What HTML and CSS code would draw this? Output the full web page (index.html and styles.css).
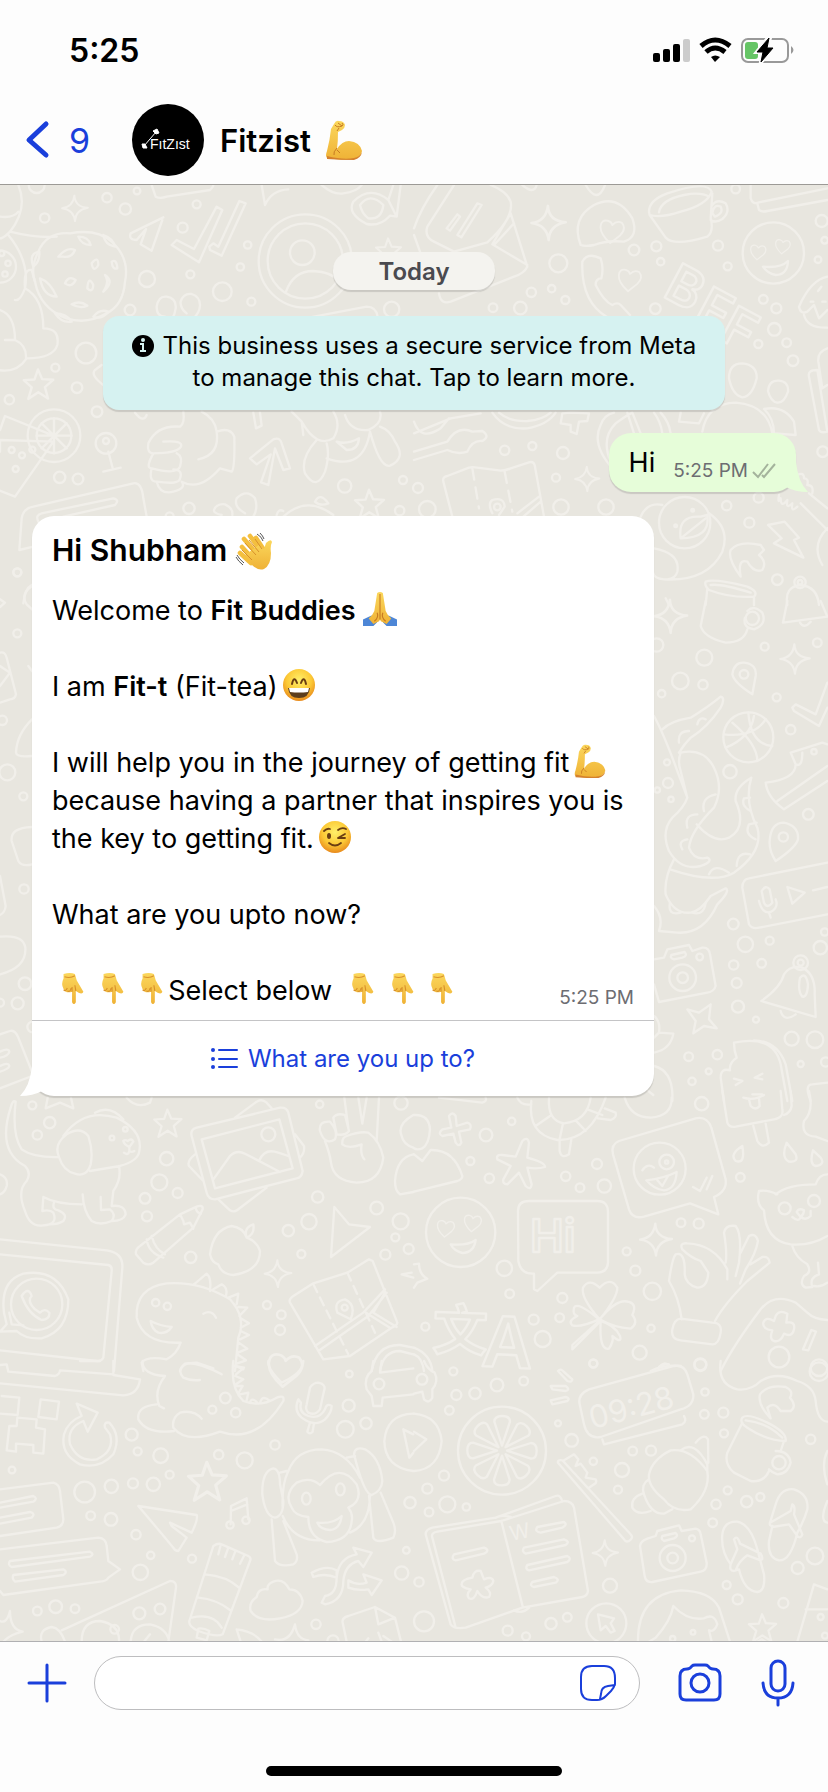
FILE: index.html
```html
<!DOCTYPE html>
<html lang="en">
<head>
<meta charset="utf-8">
<meta name="viewport" content="width=device-width, initial-scale=1">
<title>Fitzist chat</title>
<link rel="stylesheet" href="styles.css">
</head>
<body>
<svg class="defs" aria-hidden="true">
  <defs>
    <linearGradient id="skin" x1="0" y1="0" x2="0" y2="1"><stop offset="0" stop-color="#fbd75c"/><stop offset="1" stop-color="#efb236"/></linearGradient>
    <radialGradient id="face" cx=".5" cy=".35" r=".65"><stop offset="0" stop-color="#fff06a"/><stop offset=".6" stop-color="#fcc936"/><stop offset="1" stop-color="#e88a1c"/></radialGradient>
    <symbol id="arm" viewBox="0 0 38 40">
      <path d="M9 4Q11 0 14 1Q19 1 20 5Q20 8 17 10L13 12Q13 22 12 29Q17 21 24 21Q35 22 37 31Q36 37 29 39Q20 41 2 38Q0 36 2 31Q5 19 6 9Z" fill="url(#skin)"/>
      <path d="M2 36Q18 40 29 38Q35 37 37 32Q36 38 29 40Q15 40 2 39Z" fill="#d4812e"/>
      <path d="M10 5Q12 8 17 6Q19 5 17 3M13 3L17 6M12 11L14 8M12 30L15 33M12 28Q8 32 9 35" fill="none" stroke="#c77a22" stroke-width="1"/>
    </symbol>
    <symbol id="wave" viewBox="0 0 38 38">
      <g fill="none" stroke="#f4bf3f" stroke-width="4.6" stroke-linecap="round"><path d="M7 14L19 27M9 6L22 21M15 3L26 18M21 5L29 17M5 20L16 30"/></g>
      <path d="M10 22L24 12L29 16L31 10Q36 5 37 9Q35 13 36 20Q36 32 29 36Q23 38 17 32Z" fill="url(#skin)"/>
      <path d="M10 10L21 22M14 7L24 19M20 6L27 16M7 17L17 27" fill="none" stroke="#d8902b" stroke-width="1"/>
      <path d="M22 1Q27 4 28 8M25 0Q28 3 29 6M1 24Q3 28 8 32M2 22Q4 26 9 30" fill="none" stroke="#555" stroke-width="1"/>
    </symbol>
    <symbol id="pray" viewBox="0 0 36 36">
      <path d="M0 29L9 25L15 32L11 36H0ZM36 29L27 25L21 32L25 36H36Z" fill="#4d86d6"/>
      <path d="M15 1Q18 -1 21 1L24 20Q26 25 30 28L25 34L19 31L18 29L17 31L11 34L6 28Q10 25 12 20Z" fill="url(#skin)"/>
      <path d="M18 2V22M15 22Q17 27 12 31M21 22Q19 27 24 31M18 22V29" fill="none" stroke="#c77a22" stroke-width="1.2"/>
    </symbol>
    <symbol id="grin" viewBox="0 0 34 34">
      <circle cx="17" cy="17" r="16" fill="url(#face)"/>
      <path d="M10 16Q12 7 15 15M19 15Q22 7 24 16" fill="none" stroke="#6a3e12" stroke-width="2" stroke-linecap="round"/>
      <path d="M6 20H28Q27 30 17 30Q7 30 6 20Z" fill="#5c3d1c"/><path d="M7 20H27L26 24Q17 25 8 24Z" fill="#fff"/>
    </symbol>
    <symbol id="wink" viewBox="0 0 34 34">
      <circle cx="17" cy="17" r="16" fill="url(#face)"/>
      <ellipse cx="11" cy="16" rx="2" ry="3" fill="#6a3e12"/>
      <path d="M20 18L27 14M20 18H27M6 11Q9 8 12 9M20 10Q24 7 28 9M11 23Q17 28 23 23" fill="none" stroke="#6a3e12" stroke-width="1.8" stroke-linecap="round"/>
    </symbol>
    <symbol id="down" viewBox="0 0 32 36">
      <path d="M6 2Q13 0 18 2L20 9L27 21Q26 24 22 22L19 20V32Q17 36 15 32V21Q8 23 6 18Q3 13 6 7Z" fill="url(#skin)"/>
      <path d="M7 5Q13 7 18 4M6 19Q8 21 10 17M10 20Q13 22 14 17M15 21V16M19 20L18 14" fill="none" stroke="#d8902b" stroke-width="1.2"/>
    </symbol>
    <symbol id="star" viewBox="0 0 100 100"><path d="M48 6L60 34L92 36L68 57L77 90L49 72L20 91L30 58L7 37L38 35Z"/></symbol>
    <symbol id="spark" viewBox="0 0 100 100"><path d="M48 4Q50 45 96 48Q52 55 50 96Q45 55 4 50Q43 45 48 4Z"/></symbol>
    <symbol id="heart" viewBox="0 0 100 100"><path d="M42 93Q3 58 6 29Q9 4 33 9Q47 13 50 25Q67 7 86 17Q104 39 79 64Z"/></symbol>
  </defs>
</svg>

<header class="top">
  <div class="status">
    <time class="clock">5:25</time>
    <svg class="status-icons" viewBox="0 0 144 26" role="img" aria-label="Signal, Wi-Fi, battery charging">
      <rect x="1" y="16" width="7" height="9" rx="2"/><rect x="11" y="12" width="7" height="13" rx="2"/><rect x="21" y="7" width="7" height="18" rx="2"/><rect x="31" y="2" width="7" height="23" rx="2" fill="#ccc"/>
      <path d="M49 9Q63 -3 78 9" fill="none" stroke="#000" stroke-width="5"/><path d="M54 15Q63 7 73 15" fill="none" stroke="#000" stroke-width="5"/><path d="M59 20Q63 17 68 20L63 25Z"/>
      <rect x="90" y="2" width="46" height="23" rx="6" fill="none" stroke="#999" stroke-width="2"/><path d="M139 9Q144 13 139 17Z" fill="#999"/>
      <rect x="93" y="5" width="13" height="17" rx="3" fill="#66c566"/>
      <path d="M116 1L105 15H111L109 25L121 11H115L118 1Z" stroke="#fdfdfd" stroke-width="4"/><path d="M117 1L105 15H111L109 25L121 11H115Z" stroke="#000"/>
    </svg>
  </div>
  <nav class="bar">
    <button class="back" type="button" aria-label="Back, 9 unread">
      <svg class="chevron" viewBox="0 0 26 42"><path d="M22 5L5 21L22 36"/></svg>9
    </button>
    <svg class="avatar" viewBox="0 0 72 72" role="img" aria-label="FitZist logo">
      <circle cx="36" cy="36" r="36"/>
      <path d="M12 42L24 28" stroke="#fff" stroke-width="1"/><path d="M10 40L13 40L15 44L11 44ZM21 27L25 25L27 29L24 30Z" fill="#fff" stroke="#fff"/>
      <text x="18" y="45" class="logo-text">FıtZıst</text>
    </svg>
    <h1 class="name">Fitzist</h1>
    <svg class="name-emoji" role="img" aria-label="flexed biceps"><use href="#arm"/></svg>
  </nav>
</header>

<main class="chat">
  <svg class="wallpaper" viewBox="0 184 828 1457" preserveAspectRatio="xMidYMin slice" aria-hidden="true">
    <g transform="translate(0 184) scale(.33333)">
      <path d="M55 0Q85 70 30 140Q0 170 -5 155M0 95Q40 100 55 80M30 140Q110 160 170 155M25 150Q90 230 75 310Q60 350 45 345M75 310Q130 340 130 430Q180 430 172 480Q160 520 80 520Q50 565 -5 555M0 375Q45 390 45 465Q80 480 78 520M15 465H45M75 310Q70 250 95 255L105 290"/>
      <path d="M115 200Q140 140 210 145Q290 130 335 170Q390 220 375 290Q370 360 320 385Q260 420 200 400Q120 370 105 290Q90 250 115 200Z"/>
      <path d="M175 215Q200 185 225 195Q215 220 190 215ZM235 155Q265 155 272 180Q245 180 235 155ZM310 150Q340 160 345 185Q315 180 310 150ZM100 245Q85 205 118 200Q120 230 100 245ZM120 280Q150 290 170 335Q130 335 120 280ZM195 295Q205 270 227 285Q215 310 195 295ZM275 235Q295 210 295 240Q280 265 275 235ZM262 310Q265 270 280 300Q278 325 262 310ZM310 320Q330 290 315 270Q345 290 310 320ZM215 358Q240 345 262 362Q240 372 215 358ZM165 385Q200 385 215 410Q185 415 165 385ZM280 395Q300 370 325 380Q305 405 280 395ZM335 230Q350 220 352 250Q337 255 335 230Z"/>
      <path d="M455 0L467 35Q480 42 500 35L630 15Q640 5 640 0M785 0L795 60Q815 15 865 13M490 97L392 145Q385 165 410 165L438 132L422 178L455 197L487 105M515 180L530 165L582 192L650 65L667 75L597 232ZM628 185L640 175L655 185L718 48L737 55L665 212L630 195ZM965 0Q1000 30 1030 25Q1070 20 1085 0M1060 50Q1110 0 1165 45L1190 95L1170 92Q1140 125 1100 117Q1040 85 1060 50ZM1080 60Q1110 20 1150 60Q1145 105 1105 100Q1085 85 1080 60ZM1180 0L1165 45M1202 0L1190 95"/>
      <circle cx="916" cy="228" r="140"/><circle cx="916" cy="228" r="113"/><circle cx="907" cy="203" r="37"/><path d="M858 320Q880 258 940 258Q995 262 1010 285"/>
      <path d="M495 395Q470 395 470 365Q475 332 500 335Q530 340 527 370Q522 405 500 420M560 385Q540 370 542 350Q550 324 575 327Q600 335 600 360Q600 385 575 405M930 397L1100 365Q1128 365 1133 395"/>
      <circle cx="162" cy="752" r="79"/><circle cx="162" cy="752" r="52"/><path d="M162 700V805M110 752H215M125 715L200 790M200 715L125 790M0 765L160 770L45 935L-5 915M0 735L15 693L160 752M0 765V800"/>
      <path d="M550 680Q555 715 540 725Q470 720 445 775Q440 805 460 805Q435 850 455 850Q445 890 470 890Q480 930 520 920Q560 910 545 890Q600 920 660 850L695 860Q705 850 703 755Q690 725 650 740Q645 700 605 680M490 770Q550 765 543 785Q530 805 460 805M455 850Q530 870 540 845Q550 815 530 805M470 890Q540 900 540 880Q550 855 520 853M595 823Q660 810 650 740M405 683Q430 715 440 690"/>
      <path d="M750 820L820 763Q840 755 845 775L870 850L850 855L825 790L805 900L783 892L812 808L770 838ZM760 683L768 730L785 722L780 683M875 680L905 710Q950 790 1000 760Q1025 720 1000 680M1035 690Q1050 740 1105 735Q1150 715 1140 680M1010 770Q1040 780 1077 760Q1075 795 1040 795ZM905 710L910 750M1110 740Q1090 860 980 820M950 765Q900 820 915 865Q950 920 975 860Q990 810 980 775M1110 740Q1140 850 1170 842Q1220 820 1185 770Q1170 735 1140 725"/>
      <path d="M58 1095L65 1000Q70 970 100 965L400 895Q425 890 430 940L440 995M115 1010Q105 990 125 985L340 940Q360 945 345 960L190 995M58 1095L100 1085M665 990Q640 985 642 975Q650 955 675 958Q700 970 697 990M735 985Q700 965 710 940Q740 910 765 940Q775 970 760 995M850 995Q920 930 1000 990M830 990Q835 970 850 978M945 950Q960 920 985 955Q960 965 945 950M70 1255Q75 1210 95 1200"/>
      <path d="M310 600Q270 570 285 555L305 540M310 860L362 848M338 850L325 800"/>
      <g class="rings"><circle cx="318" cy="775" r="31"/><circle cx="318" cy="768" r="9"/><circle cx="110" cy="0" r="24"/><circle cx="321" cy="38" r="14"/><circle cx="411" cy="18" r="10"/><circle cx="376" cy="72" r="17"/><circle cx="134" cy="99" r="14"/><circle cx="590" cy="58" r="12"/><circle cx="548" cy="128" r="15"/><circle cx="743" cy="180" r="11"/><circle cx="721" cy="246" r="11"/><circle cx="571" cy="268" r="12"/><circle cx="441" cy="282" r="24"/><circle cx="667" cy="320" r="28"/><circle cx="754" cy="350" r="12"/><circle cx="390" cy="375" r="16"/><circle cx="1175" cy="373" r="23"/><circle cx="258" cy="504" r="31"/><circle cx="166" cy="548" r="12"/><circle cx="231" cy="608" r="16"/><circle cx="28" cy="644" r="14"/><circle cx="291" cy="680" r="16"/><circle cx="35" cy="795" r="9"/><circle cx="66" cy="811" r="9"/><circle cx="97" cy="794" r="9"/><circle cx="47" cy="852" r="9"/><circle cx="179" cy="877" r="17"/><circle cx="234" cy="882" r="16"/><circle cx="567" cy="970" r="17"/><circle cx="509" cy="994" r="12"/><circle cx="1034" cy="903" r="20"/><circle cx="1209" cy="885" r="12"/><circle cx="1199" cy="977" r="14"/><circle cx="52" cy="1162" r="12"/><circle cx="0" cy="245" r="48"/><circle cx="24" cy="235" r="8"/><circle cx="15" cy="267" r="8"/><circle cx="5" cy="205" r="8"/></g>
      <use href="#spark" x="183" y="28" width="84" height="84"/><use href="#star" x="64" y="547" width="104" height="104"/><use href="#star" x="1122" y="155" width="88" height="88"/><use href="#star" x="1058" y="908" width="102" height="102"/>
    </g>
    <g transform="translate(414 184) scale(.33333)">
      <path d="M120 0L40 125Q30 155 60 170L120 200L220 172Q300 100 290 50Q280 20 230 0M290 85L340 245Q330 265 300 275L110 350Q80 360 75 325M290 85L235 178L340 240M300 115L240 180M98 130L130 88L138 95L108 137ZM130 150L190 55L203 60L142 157ZM0 130Q20 70 70 0M0 150L18 200M325 0Q360 30 368 0M515 0Q550 60 573 0"/>
      <path d="M500 180Q470 100 540 60Q610 25 655 100Q675 155 630 170Q580 165 540 180Q515 185 500 180Z"/>
      <path d="M705 80Q705 45 760 25Q880 -15 893 20Q880 60 800 80Q740 100 707 90ZM707 90L755 158Q780 185 880 155Q900 140 890 100L895 25M735 82Q740 45 810 30Q860 20 885 35M895 60Q910 40 935 55Q950 80 925 102Q905 115 890 105M895 85Q900 55 920 65Q930 85 903 95ZM1010 0V40Q1015 60 1035 52L1240 10M1030 55L1035 75Q1045 82 1060 78L1240 45"/>
      <circle cx="1078" cy="204" r="92"/><path d="M1047 245Q1100 250 1122 228Q1120 270 1085 270Q1060 265 1047 245ZM505 230Q520 200 560 220Q570 250 562 280Q545 280 545 300Q570 350 595 360Q610 350 620 360L648 390M505 230Q500 350 580 397"/>
      <g class="doodle-text" font-size="160"><text transform="translate(742 332) rotate(28)">B</text><text transform="translate(835 402) rotate(28)">F</text><text transform="translate(910 460) rotate(28)">F</text></g>
      <path d="M1240 275Q1190 285 1155 365Q1160 390 1180 380L1200 360L1215 400L1240 375M1170 390Q1180 430 1240 428M1190 350H1198M1212 318L1222 305M1225 350H1235M1240 490Q1210 500 1213 530L1225 610L1240 600M1185 575Q1180 555 1210 555L1240 740Q1220 745 1215 735ZM0 745L110 700L200 685M0 710Q20 770 80 730L105 700M0 800L100 770Q130 720 175 740L205 738Q230 755 205 768Q175 765 160 800Q130 810 100 795L0 825M235 683Q270 735 340 730Q400 720 425 683M255 683Q285 710 340 708Q385 705 410 683M440 715L445 685L470 683L525 685L520 708L495 710L488 747L470 740L470 720ZM600 855Q530 780 560 720Q570 690 600 683M770 745Q765 710 740 683M590 830Q560 760 605 715Q640 690 655 683M640 683L660 745M655 683L680 745M720 683Q740 710 745 745M795 710L800 683M795 710L855 715L870 685"/>
      <path d="M945 580Q945 535 985 535Q1030 540 1028 580Q1015 635 985 637Q955 630 945 580ZM865 740Q880 655 965 653Q1060 660 1075 745M1062 618Q1065 585 1095 587Q1125 590 1122 620Q1110 655 1090 653Q1070 650 1062 618ZM1050 672Q1110 660 1140 710L1145 750L1080 745Q1080 700 1050 672Z"/>
      <path d="M115 995L88 890Q85 875 100 873L165 848Q175 845 190 848L260 857Q275 857 290 850L345 832Q358 828 362 840L390 995M235 985Q220 955 235 945Q270 935 272 965L255 990M310 985L375 935M328 995L380 950"/><path d="M175 850L195 970M272 860L295 980" stroke-dasharray="34 24"/>
      <circle cx="812" cy="1013" r="77"/><path d="M680 995Q700 950 745 960M885 985Q950 1030 925 1100Q880 1190 750 1183Q720 1180 718 1165M720 1090Q800 1105 790 1160Q785 1180 760 1183M800 1060Q790 990 860 995L880 990Q890 1060 800 1060ZM800 1060L875 1000M1062 1020L1112 1010L1155 1058L1140 1065L1168 1118L1080 1075L1103 1060ZM980 1175Q940 1120 950 1095Q975 1065 1040 1080L1050 1095L1035 1110Q1060 1130 1045 1155Q1020 1165 1000 1130Q970 1120 980 1175ZM875 1190Q900 1180 1000 1205Q1035 1220 1020 1235Q950 1240 885 1215Q870 1200 875 1190ZM890 1200Q920 1195 1010 1223M880 1210L875 1260M1020 1235V1260M1120 1260Q1110 1205 1160 1200Q1210 1205 1215 1260M755 1240L765 1260M1095 930Q1090 960 1100 940Q1100 970 1120 945Q1115 975 1135 955Q1130 985 1150 965M1150 870Q1170 860 1170 880Q1185 880 1180 900Q1200 900 1195 925M1160 955L1240 1035M1185 925L1240 970M1240 1030Q1190 1080 1225 1140"/>
      <circle cx="1158" cy="1192" r="17"/><circle cx="1158" cy="1192" r="7"/><circle cx="250" cy="966" r="10"/>
      <g class="rings"><circle cx="965" cy="12" r="13"/><circle cx="1223" cy="108" r="18"/><circle cx="1232" cy="166" r="10"/><circle cx="1212" cy="224" r="10"/><circle cx="912" cy="182" r="15"/><circle cx="941" cy="244" r="12"/><circle cx="660" cy="195" r="16"/><circle cx="727" cy="184" r="15"/><circle cx="740" cy="230" r="11"/><circle cx="433" cy="235" r="27"/><circle cx="352" cy="322" r="14"/><circle cx="413" cy="311" r="11"/><circle cx="454" cy="345" r="12"/><circle cx="319" cy="369" r="19"/><circle cx="237" cy="368" r="13"/><circle cx="724" cy="371" r="16"/><circle cx="1048" cy="343" r="13"/><circle cx="1087" cy="370" r="15"/><circle cx="1081" cy="433" r="19"/><circle cx="1033" cy="477" r="12"/><circle cx="1118" cy="473" r="13"/><circle cx="1137" cy="527" r="16"/><circle cx="1226" cy="800" r="16"/><circle cx="447" cy="804" r="18"/><circle cx="355" cy="783" r="12"/><circle cx="272" cy="796" r="14"/><circle cx="426" cy="878" r="12"/><circle cx="441" cy="966" r="23"/><circle cx="576" cy="966" r="23"/><circle cx="40" cy="973" r="25"/><circle cx="12" cy="909" r="15"/><circle cx="938" cy="962" r="14"/><circle cx="1006" cy="1013" r="15"/><circle cx="1090" cy="1184" r="16"/><circle cx="1034" cy="938" r="15"/><circle cx="785" cy="1022" r="4"/><circle cx="836" cy="976" r="4"/></g>
      <use href="#spark" x="348" y="58" width="112" height="112"/><use href="#spark" x="480" y="842" width="80" height="80"/><use href="#heart" x="555" y="100" width="80" height="80"/><use href="#heart" x="604" y="248" width="88" height="76"/><use href="#heart" x="1003" y="176" width="60" height="52"/><use href="#heart" x="1078" y="160" width="58" height="50"/>
    </g>
    <g transform="translate(0 500) scale(.33333)">
      <path d="M96 255Q60 280 80 310L96 325M0 455Q15 450 20 470L48 580Q45 595 30 595L0 605M0 555L30 515L0 495M0 295L15 305L0 318M96 655Q50 700 48 755Q50 770 96 765M96 978Q30 980 35 1020L55 1080Q65 1098 96 1090M85 495L96 510"/>
      <circle cx="52" cy="214" r="12"/><circle cx="52" cy="397" r="12"/><circle cx="7" cy="658" r="14"/><circle cx="22" cy="814" r="24"/><circle cx="70" cy="886" r="12"/><circle cx="72" cy="1164" r="14"/>
    </g>
    <g transform="translate(0 840) scale(.33333)">
      <path d="M0 105L17 195Q15 215 0 222M0 287Q70 280 76 320Q80 380 0 400M0 580L30 570Q45 565 55 590L95 690M0 742L96 705M0 632Q25 620 28 632Q25 645 0 650M0 675Q25 662 28 675Q25 685 0 692"/>
      <circle cx="75" cy="428" r="19"/><circle cx="53" cy="487" r="18"/><circle cx="0" cy="485" r="12"/><circle cx="98" cy="558" r="16"/>
    </g>
    <g transform="translate(414 600) scale(.33333)">
      <path d="M875 0L860 75Q870 110 935 125Q990 125 1000 85M1000 30Q1020 10 1045 35Q1060 70 1020 85Q985 80 993 50M1120 0L1107 65L1240 47L1220 0M1158 65Q1170 85 1190 62"/><circle cx="1015" cy="52" r="20"/>
      <path d="M955 220Q960 183 990 185Q1030 190 1025 225L1015 280Q960 245 955 220ZM1067 720Q1070 665 1110 665Q1155 675 1152 715Q1145 740 1085 780Q1065 750 1067 720Z"/>
      <path d="M720 345Q750 400 790 510L820 590Q810 620 775 650Q740 690 765 750Q800 810 860 795Q900 780 880 770Q840 780 825 740Q830 690 900 620Q930 560 900 500Q870 440 800 455Q790 480 800 510L820 590M745 385Q770 360 830 350Q880 320 920 287Q935 290 920 320Q880 380 830 410Q810 430 795 455M768 805Q900 850 960 815Q1050 750 1030 680Q990 600 1012 530Q960 560 965 600Q1000 680 945 710Q900 730 848 670M780 775Q750 830 755 880Q780 940 830 935Q860 930 890 885L935 862Q950 870 910 910Q870 1000 790 995L735 990Q750 950 720 915"/>
      <path d="M795 425Q790 390 825 390M850 370Q855 345 875 355M870 630Q860 590 905 580M820 680Q810 640 850 640M805 745Q790 720 820 715M885 820Q900 785 945 815M968 795Q970 750 1008 760M1025 715Q990 700 1005 670L1028 665M1010 630Q980 615 990 592L1008 590M768 905Q760 945 800 935M835 935Q870 945 875 905"/>
      <circle cx="1003" cy="409" r="75"/><path d="M930 400Q1020 410 1055 355M1003 335Q1010 430 1075 435M935 440Q1010 410 1020 345M955 365Q1030 430 1030 480M1135 320L1145 310L1205 340L1240 245M1135 320L1140 330L1215 375L1240 320M1130 455L1225 425L1240 430M1130 455L1145 490Q1165 500 1165 455M1145 490Q1145 535 1055 545Q1060 590 1110 625L1240 540M1090 600L1240 495M1240 785L1005 832Q985 835 985 860L1005 970Q1015 985 1035 980L1240 940M1120 858L1172 875L1135 908ZM1197 868L1240 858M1043 870Q1055 850 1067 865L1075 905Q1060 925 1050 905ZM1035 900Q1045 940 1070 933Q1095 920 1085 895M1065 935L1070 950"/>
      <path d="M720 1075L750 1070L760 1045L825 1032L835 1050L865 1040Q885 1038 888 1060L905 1155Q900 1172 880 1175L735 1203L720 1150M772 1062L812 1053Q822 1065 805 1070L780 1075Q767 1072 772 1062Z"/><circle cx="806" cy="1130" r="40"/><circle cx="806" cy="1130" r="16"/><circle cx="857" cy="1068" r="10"/>
      <path d="M1042 1200Q1100 1160 1110 1120Q1130 1090 1165 1100Q1205 1120 1202 1180L1205 1248ZM1100 1230Q1110 1265 1145 1240M1158 1130Q1175 1110 1182 1150Q1180 1190 1165 1187Q1150 1170 1158 1130Z"/><circle cx="1160" cy="1085" r="22"/><circle cx="1160" cy="1085" r="9"/>
      <path d="M820 1225L855 1235L890 1210L885 1255L908 1282L870 1275L838 1297L845 1260ZM720 1245Q740 1260 735 1295L720 1310M735 1295L778 1298Q770 1345 720 1355M720 1395Q780 1410 775 1500M960 1325Q960 1350 968 1370Q945 1385 948 1408Q920 1400 920 1430L930 1500M960 1325Q1080 1300 1100 1390L1120 1500M1020 1318Q1090 1320 1115 1390L1135 1500M960 1433L985 1440L965 1452M1045 1418L1022 1430L1045 1435M1015 1480H1045M1190 1500Q1170 1450 1195 1450L1240 1445"/>
      <g class="rings"><circle cx="728" cy="132" r="20"/><circle cx="871" cy="170" r="24"/><circle cx="799" cy="240" r="25"/><circle cx="867" cy="251" r="14"/><circle cx="990" cy="220" r="13"/><circle cx="1052" cy="137" r="12"/><circle cx="1210" cy="125" r="13"/><circle cx="1088" cy="289" r="12"/><circle cx="1130" cy="386" r="14"/><circle cx="743" cy="278" r="11"/><circle cx="759" cy="484" r="9"/><circle cx="762" cy="546" r="15"/><circle cx="730" cy="567" r="8"/><circle cx="771" cy="595" r="8"/><circle cx="948" cy="512" r="20"/><circle cx="1183" cy="640" r="16"/><circle cx="1108" cy="708" r="14"/><circle cx="958" cy="969" r="16"/><circle cx="994" cy="1030" r="23"/><circle cx="1067" cy="1019" r="12"/><circle cx="1219" cy="1040" r="20"/><circle cx="1232" cy="993" r="11"/><circle cx="959" cy="1092" r="14"/><circle cx="1043" cy="1087" r="13"/><circle cx="968" cy="1146" r="15"/><circle cx="972" cy="1217" r="18"/><circle cx="1026" cy="1256" r="9"/><circle cx="1133" cy="1313" r="21"/><circle cx="1203" cy="1316" r="25"/><circle cx="824" cy="1367" r="13"/><circle cx="910" cy="1361" r="14"/><circle cx="884" cy="1411" r="9"/><circle cx="834" cy="1441" r="11"/><circle cx="1160" cy="1389" r="9"/><circle cx="1235" cy="1383" r="14"/><circle cx="1200" cy="452" r="8"/></g>
      <use href="#spark" x="716" y="-8" width="108" height="108"/><use href="#spark" x="1095" y="126" width="96" height="96"/>
    </g>
    <g transform="translate(0 1090) scale(.33333)">
      <path d="M47 32Q38 25 32 50Q-10 180 75 225Q95 245 80 270Q50 300 75 360Q90 410 130 403Q175 400 160 365Q150 355 127 360L130 318Q170 340 245 340M47 32Q35 130 65 175Q100 200 177 198M190 135Q250 50 350 80Q430 120 418 180Q415 210 360 225L270 240M285 65Q330 40 370 85M177 198Q160 160 200 130Q240 105 265 135Q280 180 272 220Q260 260 225 248Q190 240 177 198ZM162 335Q155 355 175 358Q205 370 190 390Q175 400 150 400M248 310Q250 360 275 390Q300 405 335 390Q350 370 330 355L303 357L302 318M357 225Q365 265 340 300L335 345Q375 340 377 370Q370 390 335 390M370 150Q375 145 383 150Q395 140 400 152L388 168Q372 160 370 150M388 168V182M372 185Q385 195 388 180Q395 185 403 180"/>
      <circle cx="336" cy="141" r="7"/><circle cx="376" cy="115" r="7"/>
      <path d="M143 20L137 52L180 35L220 52L213 20M380 20Q410 55 450 35L455 20"/>
      <path d="M575 135Q570 115 590 110L840 50Q860 48 865 65L908 240Q905 260 890 262L645 325Q625 325 620 305ZM605 145L838 85L878 232L645 292ZM705 80L770 32Q785 22 800 35L815 52M885 130L912 165Q915 185 900 200M585 190Q560 210 567 225L610 270M655 325L690 358Q702 365 712 357L800 290M640 265L690 195Q710 175 735 188L840 243M778 208Q795 170 835 185L865 195"/><circle cx="805" cy="130" r="21"/>
      <path d="M1033 20L1045 110M1075 20L1087 98L1100 20M1137 20L1130 150M960 120Q955 90 990 92Q1015 120 1005 145Q975 165 960 120ZM1000 80Q1010 65 1035 72L1047 120Q1035 135 1010 130ZM975 150Q990 190 993 215Q1000 270 1070 275Q1140 275 1150 200Q1140 150 1105 125Q1080 120 1040 135Q1025 140 1027 160Q1045 175 1085 160Q1080 190 1093 205M1240 72Q1190 100 1205 135Q1210 160 1240 170M1240 190Q1190 200 1185 270Q1185 300 1200 310L1240 303M0 250Q25 260 20 285Q15 305 0 310"/>
      <path d="M408 490Q405 475 420 465L540 370L590 347Q610 340 608 355L580 410L460 515Q445 525 430 515ZM540 370L550 390L552 400L570 395L580 413M440 445Q445 485 490 500M455 435Q465 475 495 490M587 350Q590 365 603 368"/>
      <path d="M740 440Q730 410 695 405Q640 415 630 490Q635 515 655 520Q665 550 700 552Q780 540 780 480Q770 450 740 440ZM740 440Q730 410 760 400Q765 430 740 440"/>
      <path d="M0 445L320 478Q370 485 367 530L342 840M0 490L325 522Q337 525 335 540L310 800Q305 812 290 810L0 778"/><circle cx="110" cy="640" r="77"/><path d="M12 665Q0 570 70 548Q170 530 205 625Q205 720 125 742Q75 745 50 720L0 722L20 700L12 665M28 665L35 700L70 703M65 615Q85 585 95 615Q80 630 105 655L120 665Q135 650 148 665Q150 685 125 687Q85 670 65 615"/>
      <path d="M425 815Q440 795 500 805Q530 790 542 755Q430 760 410 680Q405 590 500 577Q600 570 690 625Q740 680 715 740L705 840M582 580L620 548Q635 560 630 600M640 595L665 580Q685 590 678 615M685 620L715 608L710 640M715 648L742 650L718 675M722 682L747 697L722 710M722 720L747 732L720 745M716 755L742 773L714 785M712 790L738 808L710 818M708 825L730 835M452 690Q480 705 515 708Q500 730 475 725Q455 715 452 690ZM610 668Q635 655 648 680M425 815L430 840M540 840Q545 815 590 815L640 832"/>
      <path d="M1003 348L1047 400L1110 408L993 498ZM870 635Q865 625 880 615L940 577L1042 545L1107 505L1118 510L1192 695Q1190 705 1175 710L1050 795L970 805ZM945 765L1090 665L1155 595M955 780L1105 675L1160 605M1098 665L1172 712M1120 665L1155 605M1120 665L1190 708M1012 665Q1000 630 1035 625Q1070 640 1052 685Z"/><path d="M940 580L1010 720L1045 790M1042 545L1125 725" stroke-dasharray="26 18"/><circle cx="1034" cy="650" r="9"/>
      <path d="M1205 550L1240 560M1205 550L1235 545M1115 840Q1130 760 1200 762L1240 770M1140 840Q1150 780 1200 780L1240 790"/>
      <g class="rings"><circle cx="97" cy="43" r="12"/><circle cx="149" cy="95" r="17"/><circle cx="112" cy="132" r="14"/><circle cx="500" cy="203" r="20"/><circle cx="478" cy="274" r="24"/><circle cx="533" cy="306" r="15"/><circle cx="435" cy="322" r="16"/><circle cx="441" cy="376" r="15"/><circle cx="572" cy="499" r="17"/><circle cx="953" cy="318" r="17"/><circle cx="927" cy="392" r="23"/><circle cx="865" cy="419" r="17"/><circle cx="904" cy="489" r="12"/><circle cx="1130" cy="351" r="19"/><circle cx="1202" cy="391" r="24"/><circle cx="1186" cy="439" r="12"/><circle cx="1226" cy="474" r="15"/><circle cx="1156" cy="491" r="15"/><circle cx="959" cy="40" r="11"/><circle cx="1203" cy="36" r="20"/><circle cx="801" cy="642" r="12"/><circle cx="844" cy="671" r="13"/><circle cx="840" cy="717" r="15"/><circle cx="467" cy="635" r="11"/><circle cx="502" cy="646" r="11"/></g>
      <use href="#star" x="456" y="50" width="96" height="96"/><use href="#spark" x="790" y="504" width="88" height="88"/><use href="#heart" x="800" y="778" width="114" height="120"/>
    </g>
    <g transform="translate(414 1090) scale(.33333)">
      <circle cx="140" cy="424" r="104"/><path d="M110 460Q160 465 185 447Q180 485 145 486Q120 480 110 460ZM0 72Q45 70 48 115Q45 160 25 172Q10 178 0 172M0 190L25 210L50 177Q120 175 145 255Q145 265 130 270L0 302M75 20L205 35Q220 30 215 20"/>
      <path d="M105 75Q115 60 125 75L128 105L160 95Q175 100 168 115L135 122L142 155Q135 170 125 155L118 128L85 135Q70 128 85 115L112 110Z"/>
      <path d="M325 150Q340 135 345 155L340 200Q395 215 393 228Q370 235 340 230L353 280Q350 300 335 285L315 245L280 280Q265 280 268 265L290 225L250 205Q245 190 265 192L305 197Z"/>
      <path d="M352 30Q340 130 430 147Q530 150 575 20M405 20Q400 90 450 97Q520 90 530 20M365 105L408 75M447 97L437 145M485 88L515 120M520 55L565 72M437 145V180Q442 205 465 190L472 145M552 82L590 87Q610 80 605 65L572 52M310 20Q320 45 352 40M632 20Q650 80 710 80Q775 75 773 20M703 0L718 12"/>
      <path d="M597 190Q590 160 615 150L845 82Q880 75 892 110L935 265Q940 300 900 318L913 370L828 337L690 377Q655 385 645 355Z"/><circle cx="737" cy="233" r="78"/><circle cx="758" cy="213" r="22"/><circle cx="758" cy="213" r="5"/><path d="M685 238Q700 215 720 230M697 268Q750 262 788 243Q785 295 750 298Q720 295 697 268ZM730 268L745 285L762 255M837 288L858 300L878 260M878 295L895 255"/>
      <path d="M925 0L940 95Q945 110 965 107L1080 85Q1110 80 1105 55L1100 0M1130 0L1133 45Q1130 65 1110 72M1018 105L1030 150Q1045 175 1065 155L1055 98M988 20Q1020 30 1050 12M1005 25L1010 45Q1025 60 1037 45L1035 22M985 165Q945 190 965 210Q995 220 985 165ZM1118 155Q1100 200 1125 212Q1155 215 1145 190ZM1197 178Q1185 220 1205 225Q1235 220 1220 200ZM1185 0Q1200 60 1170 90Q1160 135 1205 137L1240 150"/>
      <path d="M1090 310Q1060 295 1035 300Q1025 340 1050 358M1050 358Q1055 450 1130 460Q1190 465 1240 435M1085 310Q1120 280 1205 280Q1215 250 1240 250M1135 465Q1145 500 1180 520Q1195 545 1170 555Q1155 580 1175 590L1195 588Q1185 560 1215 550L1212 515M1200 585Q1220 590 1240 575M1148 363Q1155 350 1170 358Q1170 370 1160 378ZM1160 378Q1155 395 1135 378M1160 378Q1175 390 1190 375V360"/><circle cx="1112" cy="352" r="18"/><circle cx="1200" cy="330" r="18"/>
      <path d="M312 360Q312 330 345 330H550Q583 330 582 365V515Q580 545 550 545H430L370 600L360 595V548Q320 550 313 510Z"/><g class="doodle-text" font-size="136"><text x="348" y="482">Hi</text></g>
      <path d="M805 475Q795 455 820 457Q900 460 940 535V565M805 475Q830 500 860 510L883 545Q880 590 850 590Q815 580 812 550Q815 480 785 490Q775 500 765 570Q795 620 803 685M935 515Q940 485 930 425Q935 400 965 405Q985 430 975 515L965 555M980 485L1005 435Q1025 425 1032 450Q1025 490 995 535L978 578M1010 520L1045 498Q1065 495 1067 515L1000 570Q930 640 903 690M800 683L895 695Q925 695 920 725Q915 760 895 760L800 748Q770 745 775 715Q780 685 800 683Z"/>
      <path d="M557 685Q500 620 507 590Q525 560 557 590Q590 555 610 590Q610 620 557 685ZM557 685Q610 620 645 633Q670 640 655 672Q675 695 650 713Q600 710 557 685ZM555 685Q490 630 480 650Q475 670 490 675Q460 690 475 703Q500 710 555 685ZM560 690Q555 780 585 773Q600 750 595 735Q625 760 618 735Q600 700 560 690ZM555 690L475 762V775L558 692"/>
      <g class="doodle-text" font-size="210"><text transform="translate(54 775) rotate(2)" class="cjk">文</text><text transform="translate(200 825) rotate(3)">A</text></g>
      <path d="M920 840Q960 760 1040 655Q1080 605 1145 635L1180 665Q1200 685 1240 687M1085 675Q1095 655 1120 668L1117 695Q1145 690 1140 715Q1135 740 1110 728Q1100 755 1080 750Q1065 745 1075 718Q1045 715 1048 695Q1055 675 1080 690ZM1167 775L1192 717L1206 722L1183 778ZM0 770Q50 790 55 840M0 790Q25 800 30 840M710 840Q750 820 800 825M735 828Q750 812 765 822"/><circle cx="1095" cy="798" r="31"/>
      <path d="M0 520L15 518Q15 550 40 563L10 575L0 590"/>
      <g class="rings"><circle cx="293" cy="91" r="11"/><circle cx="216" cy="132" r="19"/><circle cx="169" cy="210" r="12"/><circle cx="226" cy="262" r="14"/><circle cx="455" cy="256" r="14"/><circle cx="498" cy="290" r="13"/><circle cx="549" cy="219" r="15"/><circle cx="571" cy="285" r="20"/><circle cx="863" cy="38" r="20"/><circle cx="979" cy="259" r="13"/><circle cx="801" cy="395" r="13"/><circle cx="854" cy="398" r="15"/><circle cx="638" cy="481" r="12"/><circle cx="664" cy="539" r="15"/><circle cx="715" cy="601" r="26"/><circle cx="271" cy="532" r="23"/><circle cx="287" cy="608" r="13"/><circle cx="445" cy="621" r="15"/><circle cx="437" cy="680" r="13"/><circle cx="359" cy="686" r="15"/><circle cx="386" cy="744" r="24"/><circle cx="34" cy="707" r="12"/><circle cx="711" cy="712" r="11"/><circle cx="677" cy="785" r="21"/><circle cx="538" cy="817" r="12"/><circle cx="859" cy="822" r="18"/><circle cx="1215" cy="830" r="25"/></g>
      <use href="#heart" x="60" y="384" width="72" height="58"/><use href="#heart" x="140" y="368" width="74" height="58"/><use href="#spark" x="674" y="392" width="104" height="108"/>
    </g>
    <g transform="translate(0 1360) scale(.33333)">
      <path d="M0 12L20 10L25 32L165 45Q180 40 180 28L340 40V0M0 67L370 103Q415 100 420 55L340 42M240 0H300M5 105L58 110L53 162L0 158M122 115L177 122L170 175L115 168ZM52 170L110 175L108 200L135 205L130 278L100 275V252L48 248V272L20 268L28 195L50 195Z"/>
      <path d="M230 128L293 155L263 212L250 180Q200 200 210 250Q235 305 290 295Q345 270 330 220L315 200Q310 182 328 185Q365 225 340 280Q300 325 240 310Q180 280 192 220Q205 180 245 165Z"/>
      <path d="M428 0Q425 40 495 45Q460 90 478 135L492 142M470 130Q410 135 415 175Q440 220 522 210M605 173Q580 145 540 155Q515 170 520 200Q560 250 660 212Q770 250 850 120Q855 100 830 110Q780 140 730 120Q690 80 700 0M665 40Q590 0 555 8Q530 30 550 50Q570 60 600 57M703 15L732 20L708 40M706 45L730 55L708 70M708 75L728 75L716 95M720 100L745 95L740 118M750 125Q755 105 775 128M780 128Q785 100 808 118M805 0Q800 20 845 65Q910 35 910 0"/>
      <path d="M930 80Q940 65 955 65Q980 70 972 90L960 145Q945 165 925 155Q915 145 920 130ZM895 115Q880 150 905 170Q945 200 975 175Q995 155 995 135Q980 125 975 145Q960 175 925 165Q895 155 903 125ZM930 185L922 212Q930 222 938 212L942 187"/>
      <path d="M1120 0L1115 30Q1090 50 1100 85L1115 105L1120 135H1145L1148 110L1240 100M1145 0L1140 35L1240 22"/><circle cx="1137" cy="69" r="16"/><path d="M1240 158Q1160 160 1153 240Q1155 320 1240 330M1240 220L1210 205L1228 290L1240 275"/>
      <path d="M0 385L160 365Q178 370 180 390L190 475Q190 495 170 500L0 525M0 425L100 405Q115 412 100 422L0 440M0 470L90 453Q108 458 95 470L0 488M0 565L295 530Q318 532 320 555L325 600L360 625L325 650Q320 660 300 662L10 702L0 690M30 600L270 572Q285 580 270 587L35 618Q22 612 30 600ZM40 642L190 625Q205 632 190 642L45 662Q35 655 40 642Z"/>
      <path d="M415 435L590 462Q595 475 575 515L510 485L515 495L560 530L535 570Q525 570 520 560Q470 500 415 435ZM692 490L693 435L740 412L745 475M693 450L742 430"/><circle cx="690" cy="492" r="11"/><circle cx="738" cy="478" r="11"/>
      <path d="M865 330Q890 265 965 265Q1040 270 1080 350M848 465Q880 540 960 538M1110 400Q1110 490 1050 515M865 330Q845 370 848 440M960 372Q930 345 890 365Q850 400 875 440Q885 465 925 468Q925 530 980 543Q1050 540 1055 480Q1060 460 1045 440Q1090 420 1070 370Q1020 300 960 372ZM952 485Q1000 490 1025 465Q1020 505 990 507Q960 505 952 485ZM787 400Q785 330 820 322Q840 325 840 370L850 420Q850 465 825 470Q795 465 787 400ZM815 475L825 600Q840 620 880 610Q895 600 890 580L850 480M1062 280Q1065 255 1095 265Q1140 290 1147 360Q1145 390 1115 402Q1095 400 1070 310ZM1107 405L1120 530Q1130 550 1180 530Q1190 510 1180 485L1142 395M840 335L860 330M1040 290L1065 285"/><ellipse cx="919" cy="413" rx="13" ry="18"/><ellipse cx="1021" cy="385" rx="13" ry="18"/>
      <path d="M640 555Q655 545 665 550L745 585Q755 590 750 600L668 820Q650 830 595 810Q565 795 568 780ZM662 552L655 580M685 560L675 588M707 568L697 595M733 582L720 608M615 640Q680 645 717 680M595 710Q650 715 690 747M575 770Q640 755 665 800M595 803Q610 800 628 810L620 838L590 830Z"/>
      <path d="M770 708Q745 725 752 750Q775 785 840 772Q905 760 908 720Q900 685 868 685Q850 650 820 662Q800 670 803 685Q775 680 770 708ZM965 725L975 705Q1010 700 1010 650Q1015 590 1070 580L1060 560L1115 575L1090 618L1075 600Q1035 610 1030 660Q1030 720 975 730ZM935 635Q980 610 1010 628V650Q975 635 940 648ZM1045 658Q1070 675 1100 665L1090 640L1145 658L1115 702L1105 685Q1070 690 1045 680Z"/>
      <path d="M185 808L510 660Q530 660 528 680L505 842M125 842Q115 805 155 798Q180 800 195 842M245 842Q245 780 300 780Q360 790 357 842M392 842Q395 790 450 790Q500 800 508 842M432 842L450 820M710 805Q760 810 785 842M710 805L722 842M1040 842L1028 785Q1025 770 1045 765L1125 738L1185 770L1203 842M1125 738L1135 790L1185 770M1097 842L1105 832M1135 815L1145 842M1150 825L1175 842M825 835Q870 845 885 790Q890 835 925 838"/>
      <path d="M0 780Q20 790 30 750Q30 805 68 812Q30 820 10 842"/>
      <g class="rings"><circle cx="36" cy="327" r="10"/><circle cx="395" cy="221" r="18"/><circle cx="413" cy="271" r="12"/><circle cx="482" cy="284" r="22"/><circle cx="254" cy="393" r="31"/><circle cx="334" cy="376" r="20"/><circle cx="399" cy="367" r="15"/><circle cx="460" cy="370" r="20"/><circle cx="509" cy="341" r="12"/><circle cx="272" cy="464" r="13"/><circle cx="333" cy="475" r="19"/><circle cx="408" cy="521" r="14"/><circle cx="452" cy="583" r="11"/><circle cx="421" cy="634" r="23"/><circle cx="576" cy="593" r="12"/><circle cx="112" cy="750" r="13"/><circle cx="167" cy="737" r="19"/><circle cx="225" cy="743" r="13"/><circle cx="418" cy="757" r="18"/><circle cx="480" cy="744" r="16"/><circle cx="344" cy="805" r="13"/><circle cx="637" cy="146" r="12"/><circle cx="676" cy="111" r="16"/><circle cx="707" cy="155" r="14"/><circle cx="656" cy="281" r="14"/><circle cx="734" cy="298" r="24"/><circle cx="825" cy="252" r="14"/><circle cx="1048" cy="39" r="10"/><circle cx="1046" cy="134" r="18"/><circle cx="1036" cy="205" r="25"/><circle cx="1098" cy="187" r="17"/><circle cx="1230" cy="425" r="17"/><circle cx="1219" cy="568" r="10"/><circle cx="1205" cy="636" r="20"/><circle cx="948" cy="790" r="14"/><circle cx="999" cy="840" r="17"/></g>
      <use href="#star" x="556" y="296" width="134" height="134"/>
    </g>
    <g transform="translate(414 1360) scale(.33333)">
      <circle cx="264" cy="269" r="132"/>
      <path id="segment" d="M264 254L241 182Q242 165 264 165Q288 165 288 182Z"/><use href="#segment" transform="rotate(45 264 269)"/><use href="#segment" transform="rotate(90 264 269)"/><use href="#segment" transform="rotate(135 264 269)"/><use href="#segment" transform="rotate(180 264 269)"/><use href="#segment" transform="rotate(225 264 269)"/><use href="#segment" transform="rotate(270 264 269)"/><use href="#segment" transform="rotate(315 264 269)"/>
      <path d="M0 158Q75 165 83 240Q75 325 0 330M0 212L37 235L0 270M30 0Q40 25 62 35Q75 60 55 85V110Q45 130 30 115L25 92L0 98"/><circle cx="24" cy="55" r="16"/>
      <path d="M497 130Q490 100 525 85L780 15Q810 10 820 40L838 100Q840 135 800 145L560 228Q520 235 510 190ZM565 235L570 250L805 190Q820 180 810 165M735 18L750 8L765 10"/><text transform="translate(535 205) rotate(-15)" class="segment-text">09:28</text>
      <path d="M432 30Q440 20 450 33L475 55Q475 65 460 60ZM410 75L455 75Q470 85 455 90L415 85ZM410 118L455 108Q470 112 460 120L415 130Z"/>
      <path d="M432 305Q430 295 445 298L650 520Q660 530 645 540Q635 545 630 535ZM450 298L480 280L493 295L485 315L500 308L520 335L515 350L545 355Q550 365 540 370L525 380"/>
      <path d="M705 340Q715 295 770 268Q830 260 880 330Q890 390 830 445Q780 455 750 415Q700 375 705 340ZM705 355Q680 370 690 400Q710 460 750 458L775 445M685 398Q650 410 655 440Q670 465 710 450M800 268Q840 235 880 310V335M845 245Q870 215 882 235L883 305"/>
      <path d="M985 185L940 275Q930 310 960 335L1010 360Q1050 365 1065 330M1110 240L1100 270M985 170Q1000 155 1060 185Q1120 215 1115 240Q1060 240 1000 200Q975 185 985 170ZM995 178Q1060 185 1105 230M1085 270Q1125 270 1130 305Q1120 340 1090 340Q1075 335 1065 325M1070 172Q1030 130 1038 100Q1060 70 1115 78Q1140 90 1128 110Q1150 135 1130 150L1100 150Q1080 120 1060 140ZM920 0Q910 70 970 85Q1010 90 1040 60Q1090 30 1150 60Q1200 75 1205 120Q1210 180 1240 182"/><circle cx="1095" cy="305" r="20"/>
      <path d="M35 520Q35 505 55 500L245 470L425 405Q440 400 445 422M55 530Q50 515 70 512L262 480L450 420Q475 420 480 440L522 690Q520 705 505 708L325 740L155 800Q120 805 110 790L35 520M55 530L125 800M262 480L327 740M245 470Q260 460 290 468M300 748Q325 760 345 740M120 580L210 560Q230 568 210 578L125 598Q110 595 120 580ZM370 498L450 483Q462 490 445 500L380 515Q360 512 370 498ZM330 560L450 535Q470 542 455 552L335 578Q322 572 330 560ZM340 612L460 585Q475 592 460 603L345 628Q332 624 340 612ZM355 663L420 648Q440 655 425 665L360 678Q345 675 355 663ZM175 650Q180 625 200 630L210 655Q235 645 238 660Q235 675 215 680Q235 695 225 708Q205 715 190 690Q180 720 165 712Q155 700 170 685Q140 680 143 668Q145 655 175 650Z"/>
      <text transform="translate(292 540) rotate(-12)" class="page-text">W</text>
      <path d="M700 533L725 525L730 510L795 493L803 510L845 503Q858 505 860 520L878 605Q880 628 860 632L715 663Q695 665 692 645L678 555Q680 540 700 533ZM745 525L785 516Q795 525 780 532L750 540Q740 535 745 525Z"/><circle cx="776" cy="591" r="39"/><circle cx="776" cy="591" r="16"/><circle cx="834" cy="532" r="9"/>
      <path d="M925 520Q930 480 970 482Q1010 490 1030 565L1050 640Q1055 690 1030 693Q990 690 975 625L960 630Q945 630 950 610Q920 570 925 520ZM950 610L970 565L960 535Q970 520 978 548L1040 578Q1050 595 1040 598L1000 583Q975 600 965 628M1085 430Q1100 380 1140 385Q1185 400 1180 445Q1170 480 1150 515Q1130 600 1095 598Q1060 590 1065 540L1075 495Q1065 495 1068 485ZM1068 485L1130 450L1135 430Q1145 435 1140 460L1165 520Q1160 535 1150 525L1125 490L1075 498"/>
      <circle cx="577" cy="787" r="60"/><path d="M552 760L600 772L590 787L602 810L590 815L575 795L560 808ZM672 842Q670 700 800 688Q890 690 915 740L948 842M705 842L725 830Q770 780 778 735Q820 780 870 772Q900 755 910 790Q900 815 885 808L893 842M1150 842L1200 670L1240 685M1175 745H1240M1030 842L1043 835L1055 842"/><path d="M1240 270Q1220 310 1240 370M1240 420Q1215 480 1240 485"/>
      <g class="rings"><circle cx="118" cy="31" r="12"/><circle cx="127" cy="102" r="15"/><circle cx="183" cy="97" r="17"/><circle cx="106" cy="148" r="13"/><circle cx="249" cy="72" r="19"/><circle cx="329" cy="60" r="13"/><circle cx="432" cy="187" r="9"/><circle cx="473" cy="238" r="19"/><circle cx="538" cy="301" r="11"/><circle cx="538" cy="8" r="12"/><circle cx="656" cy="270" r="13"/><circle cx="711" cy="269" r="15"/><circle cx="624" cy="327" r="21"/><circle cx="612" cy="386" r="12"/><circle cx="859" cy="10" r="18"/><circle cx="873" cy="93" r="11"/><circle cx="871" cy="160" r="13"/><circle cx="928" cy="155" r="15"/><circle cx="930" cy="217" r="12"/><circle cx="1190" cy="235" r="14"/><circle cx="1215" cy="32" r="28"/><circle cx="90" cy="344" r="15"/><circle cx="40" cy="383" r="15"/><circle cx="100" cy="430" r="24"/><circle cx="45" cy="453" r="13"/><circle cx="157" cy="438" r="11"/><circle cx="15" cy="663" r="14"/><circle cx="30" cy="781" r="30"/><circle cx="588" cy="674" r="21"/><circle cx="411" cy="788" r="17"/><circle cx="460" cy="769" r="13"/><circle cx="281" cy="809" r="15"/><circle cx="336" cy="826" r="12"/><circle cx="941" cy="388" r="12"/><circle cx="906" cy="430" r="14"/><circle cx="998" cy="422" r="17"/><circle cx="1039" cy="408" r="12"/><circle cx="896" cy="485" r="13"/><circle cx="938" cy="672" r="12"/><circle cx="971" cy="715" r="15"/><circle cx="1108" cy="726" r="15"/><circle cx="1151" cy="621" r="18"/><circle cx="1203" cy="585" r="25"/><circle cx="837" cy="814" r="7"/><circle cx="776" cy="833" r="8"/><circle cx="1220" cy="768" r="9"/><circle cx="1233" cy="824" r="9"/></g>
      <use href="#spark" x="532" y="534" width="84" height="84"/><use href="#star" x="994" y="754" width="104" height="96"/>
    </g>
  </svg>

  <p class="date">Today</p>

  <button class="notice" type="button">
    <svg class="info" viewBox="0 0 22 22" aria-hidden="true"><circle cx="11" cy="11" r="11"/><path d="M8 9H11V16M8 16H14" fill="none" stroke="#d6f2f1" stroke-width="2"/><circle cx="11" cy="5" r="2" fill="#d6f2f1"/></svg>
    This business uses a secure service from Meta<br>to manage this chat. Tap to learn more.
  </button>

  <article class="bubble sent">
    <p class="text">Hi</p>
    <time class="stamp">5:25 PM</time>
    <svg class="ticks" viewBox="0 0 24 16" role="img" aria-label="Delivered"><path d="M1 9L6 14L16 1M10 12L12 14L23 1"/></svg>
    <svg class="tail tail-right" viewBox="0 0 22 30" aria-hidden="true"><path d="M10 0Q12 20 22 30Q9 30 0 25Z"/></svg>
  </article>

  <article class="bubble received">
    <div class="body">
      <h2 class="greeting">Hi Shubham <svg class="emoji large" role="img" aria-label="waving hand"><use href="#wave"/></svg></h2>
      <p class="text">Welcome to <strong>Fit Buddies</strong> <svg class="emoji" role="img" aria-label="folded hands"><use href="#pray"/></svg></p>
      <p class="text">I am <strong>Fit-t</strong> (Fit-tea)<svg class="emoji snug" role="img" aria-label="grinning face"><use href="#grin"/></svg></p>
      <p class="text">I will help you in the journey of getting fit<svg class="emoji snug" role="img" aria-label="flexed biceps"><use href="#arm"/></svg><br>because having a partner that inspires you is<br>the key to getting fit.<svg class="emoji snug" role="img" aria-label="winking face"><use href="#wink"/></svg></p>
      <p class="text">What are you upto now?</p>
      <div class="last">
        <p class="text select"><svg class="emoji point" role="img" aria-label="pointing down"><use href="#down"/></svg> <svg class="emoji point" role="img" aria-label="pointing down"><use href="#down"/></svg> <svg class="emoji point" role="img" aria-label="pointing down"><use href="#down"/></svg>Select below&nbsp; <svg class="emoji point" role="img" aria-label="pointing down"><use href="#down"/></svg> <svg class="emoji point" role="img" aria-label="pointing down"><use href="#down"/></svg> <svg class="emoji point" role="img" aria-label="pointing down"><use href="#down"/></svg></p>
        <time class="stamp">5:25 PM</time>
      </div>
    </div>
    <button class="options" type="button">
      <svg class="list" viewBox="0 0 27 22" aria-hidden="true"><path d="M8 2H26M8 11H26M8 19H26" fill="none" stroke="currentColor" stroke-width="2" stroke-linecap="round"/><circle cx="2" cy="2" r="2"/><circle cx="2" cy="11" r="2"/><circle cx="2" cy="19" r="2"/></svg>What are you up to?
    </button>
    <svg class="tail tail-left" viewBox="0 0 22 30" aria-hidden="true"><path d="M12 0Q10 20 0 30Q13 30 22 25Z"/></svg>
  </article>
</main>

<footer class="composer">
  <div class="controls">
    <button class="icon" type="button" aria-label="Attach"><svg class="plus" viewBox="0 0 40 40"><path d="M2 20H38M20 2V38"/></svg></button>
    <div class="field">
      <input class="input" type="text" aria-label="Message">
      <button class="icon" type="button" aria-label="Stickers"><svg class="sticker" viewBox="0 0 38 38"><path d="M13 2H25Q36 2 36 14V20Q35 24 32 27L27 32Q23 36 18 36H13Q2 36 2 25V13Q2 2 13 2ZM36 21L29 22Q22 23 22 30L21 35"/></svg></button>
    </div>
    <button class="icon camera-button" type="button" aria-label="Camera"><svg class="camera" viewBox="0 0 46 40"><path d="M10 6Q13 6 15 3Q16 2 18 2H28Q30 2 31 3Q33 6 36 6Q43 6 43 13V31Q43 37 37 37H9Q3 37 3 31V13Q3 6 10 6Z"/><circle cx="23" cy="20" r="9"/></svg></button>
    <button class="icon" type="button" aria-label="Voice message"><svg class="mic" viewBox="0 0 34 48"><rect x="10" y="2" width="14" height="30" rx="7"/><path d="M2 24Q3 39 17 39Q31 39 32 24M17 39V46"/></svg></button>
  </div>
  <div class="home"></div>
</footer>
</body>
</html>
```
FILE: styles.css
```css
* { box-sizing: border-box; }

body {
  margin: 0;
  min-height: 100vh;
  display: flex;
  flex-direction: column;
  background: #fdfdfd;
  color: #000;
  font-family: Inter, "Liberation Sans", sans-serif;
  font-size: 27px;
}

h1, h2, p { margin: 0; }

button {
  border: 0;
  padding: 0;
  background: none;
  color: #1a3fdb;
  font: inherit;
}

svg { flex: none; overflow: visible; }

.defs { position: absolute; width: 0; height: 0; }

.top { border-bottom: 1px solid #9c9a96; }

.status {
  height: 100px;
  padding: 0 32px 0 69px;
  display: flex;
  align-items: center;
  justify-content: space-between;
}

.clock { font-size: 32px; font-weight: 600; }
.status-icons { width: 144px; height: 26px; }

.bar {
  height: 84px;
  padding: 0 24px 4px;
  display: flex;
  align-items: center;
}

.back {
  display: flex;
  align-items: center;
  gap: 19px;
  width: 108px;
  font-size: 34px;
}

.chevron { width: 26px; height: 42px; }
.chevron path { fill: none; stroke: currentColor; stroke-width: 5; stroke-linecap: round; stroke-linejoin: round; }

.avatar { width: 72px; height: 72px; }
.logo-text { fill: #fff; font-family: "Liberation Sans", sans-serif; font-size: 14px; }

.name { margin-left: 16px; font-size: 31px; font-weight: 600; }
.name-emoji { width: 38px; height: 40px; margin-left: 14px; }

.chat {
  position: relative;
  flex: 1;
  display: flex;
  flex-direction: column;
  padding: 67px 32px 32px;
  background: #e8e6df;
  overflow: hidden;
}

.wallpaper {
  position: absolute;
  inset: 0;
  width: 100%;
  height: 100%;
  fill: none;
  stroke: #f1efea;
  stroke-width: 7;
  stroke-linecap: round;
  stroke-linejoin: round;
}

.doodle-text { font-family: Inter, sans-serif; font-weight: 600; }
.cjk { font-family: "Noto Sans CJK SC", sans-serif; font-size: 165px; }
.segment-text { font-family: Inter, sans-serif; font-size: 94px; fill: #f1efea; stroke: none; }
.page-text { font-family: Inter, sans-serif; font-size: 62px; fill: #f1efea; stroke: none; }

.date, .notice, .bubble {
  position: relative;
  box-shadow: 0 2px 1px rgba(0, 0, 0, 0.13);
}

.date {
  align-self: center;
  padding: 2px 45px 0;
  border-radius: 18px;
  background: #f4f3ef;
  color: #4a4a4f;
  font-size: 24px;
  font-weight: 600;
  line-height: 36px;
}

.notice {
  align-self: center;
  width: 622px;
  max-width: 100%;
  margin-top: 26px;
  padding: 14px 16px 16px;
  border-radius: 16px;
  background: #d6f2f1;
  color: #000;
  font-size: 24px;
  line-height: 32px;
  text-align: center;
}

.info { width: 22px; height: 22px; margin-right: 2px; vertical-align: -3px; }

.bubble { background: #fff; }

.sent {
  align-self: flex-end;
  display: flex;
  align-items: center;
  margin-top: 23px;
  padding: 10px 20px 9px;
  border-radius: 22px;
  background: #e6fdd9;
}

.text { line-height: 38px; }

.stamp { color: #6d6d72; font-size: 19px; line-height: 24px; }
.sent .stamp { margin-left: 18px; padding-top: 16px; }

.ticks { width: 24px; height: 16px; margin: 16px 0 0 4px; }
.ticks path { fill: none; stroke: #a4b39c; stroke-width: 2; }

.tail { position: absolute; bottom: 0; width: 22px; height: 30px; }
.tail-right { right: -12px; fill: #e6fdd9; }
.tail-left { left: -12px; fill: #fff; }

.received {
  align-self: flex-start;
  width: 622px;
  max-width: 100%;
  margin-top: 24px;
  border-radius: 22px;
}

.body {
  display: flex;
  flex-direction: column;
  gap: 38px;
  padding: 15px 20px 10px;
}

.greeting { margin-bottom: -15px; font-size: 30px; font-weight: 600; line-height: 38px; }

strong { font-weight: 600; }

.emoji { width: 34px; height: 34px; vertical-align: -6px; }
.large { width: 38px; height: 38px; margin-bottom: -4px; }
.snug { margin-left: 4px; }
.point { width: 32px; }

.last { display: flex; justify-content: space-between; align-items: flex-end; }
.select { padding-left: 5px; white-space: nowrap; }

.options {
  display: flex;
  align-items: center;
  justify-content: center;
  gap: 10px;
  width: 100%;
  height: 76px;
  border-top: 1px solid #c4c4c6;
  font-size: 24px;
}

.list { width: 27px; height: 22px; fill: currentColor; }

.composer { border-top: 1px solid #b0b0b2; }

.controls {
  display: flex;
  align-items: center;
  padding: 14px 33px 0 27px;
}

.icon { display: flex; align-items: center; }
.icon svg { fill: none; stroke: currentColor; stroke-width: 3; stroke-linecap: round; stroke-linejoin: round; }
.icon .sticker { width: 38px; height: 38px; stroke-width: 2; }
.plus { width: 40px; height: 40px; }
.camera { width: 46px; height: 40px; }
.mic { width: 34px; height: 48px; }
.camera-button { margin: 0 38px 0 37px; }

.field {
  flex: 1;
  display: flex;
  align-items: center;
  height: 54px;
  margin-left: 27px;
  padding: 0 22px 0 24px;
  border: 1px solid #bdbdbf;
  border-radius: 27px;
  background: #fff;
}

.input {
  flex: 1;
  min-width: 0;
  border: 0;
  outline: 0;
  background: none;
  font: inherit;
}

.home {
  width: 296px;
  height: 10px;
  margin: 56px auto 16px;
  border-radius: 5px;
  background: #000;
}
```
